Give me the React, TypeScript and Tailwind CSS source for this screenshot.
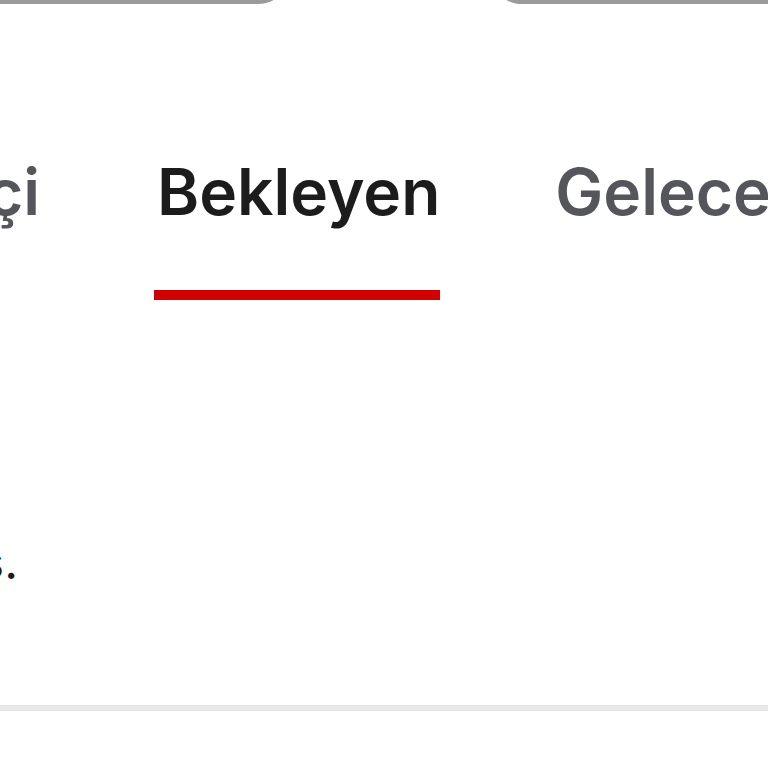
const font = { fontFamily: "Inter, 'Noto Sans', sans-serif" };

export default function App() {
  return (
    <div className="w-[768px] h-[768px] overflow-hidden bg-white" style={font}>
      {/* bottoms of the two buttons above */}
      <div className="flex justify-between">
        <div className="-ml-[40px] -mt-[60px] h-[64px] w-[330px] rounded-[36px] border-4 border-[#9b9b9b]" />
        <div className="-mr-[40px] -mt-[60px] h-[64px] w-[318px] rounded-[36px] border-4 border-[#9b9b9b]" />
      </div>

      {/* tabs */}
      <div className="mt-[156px] flex gap-[115px] whitespace-nowrap">
        <div className="-ml-[300px] w-[342px] shrink-0 pr-[2px] text-right">
          <span className="text-[64px] font-semibold leading-none text-[#55555c]">Tümü İçi</span>
        </div>
        <div className="flex shrink-0 flex-col">
          <span className="text-[64px] font-semibold leading-none text-[#1c1c1c]">Bekleyen</span>
          <div className="-ml-[3px] mt-[66px] h-[10px] bg-[#d10000]" />
        </div>
        <div className="shrink-0">
          <span className="text-[64px] font-semibold leading-none text-[#55555c]">Gelecek</span>
        </div>
      </div>

      {/* message */}
      <div className="mt-[238px] flex whitespace-nowrap">
        <div className="-ml-[582px] w-[600px] shrink-0 text-right text-[48px] leading-none text-[#1c1c1c]">
          Kazanılan puanlar: Bonus.
        </div>
      </div>

      {/* divider */}
      <div className="mt-[119px] h-[6px] border-y border-[#e2e2e2] bg-[#e9e9e9]" />
    </div>
  );
}
